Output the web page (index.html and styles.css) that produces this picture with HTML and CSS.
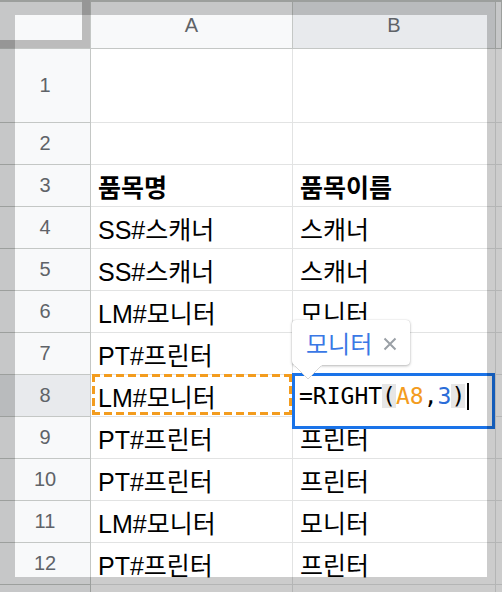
FILE: index.html
```html
<!DOCTYPE html>
<html lang="ko">
<head>
<meta charset="utf-8">
<title>Sheet</title>
<link rel="stylesheet" href="styles.css">
</head>
<body>
<div class="sheet">
  <div class="row hdr">
    <div class="rh corner"><span class="bar-v"></span><span class="bar-h"></span></div>
    <div class="ch a">A</div>
    <div class="ch b active">B</div>
    <div class="ch x"></div>
  </div>
  <div class="row tall"><div class="rh">1</div><div class="c a"></div><div class="c b"></div><div class="c x"></div></div>
  <div class="row"><div class="rh">2</div><div class="c a"></div><div class="c b"></div><div class="c x"></div></div>
  <div class="row"><div class="rh">3</div><div class="c a bold">품목명</div><div class="c b bold">품목이름</div><div class="c x"></div></div>
  <div class="row"><div class="rh">4</div><div class="c a">SS#스캐너</div><div class="c b">스캐너</div><div class="c x"></div></div>
  <div class="row"><div class="rh">5</div><div class="c a">SS#스캐너</div><div class="c b">스캐너</div><div class="c x"></div></div>
  <div class="row"><div class="rh">6</div><div class="c a">LM#모니터</div><div class="c b">모니터</div><div class="c x"></div></div>
  <div class="row"><div class="rh">7</div><div class="c a">PT#프린터</div><div class="c b"></div><div class="c x"></div></div>
  <div class="row"><div class="rh active">8</div>
    <div class="c a ref-cell">LM#모니터</div>
    <div class="c b edit-cell">
      <div class="tip">
        <span class="tip-text">모니터</span>
        <svg class="tip-x" width="14" height="14" viewBox="0 0 14 14"><path d="M1.5 1.5L12.5 12.5M12.5 1.5L1.5 12.5" stroke="#9aa0a6" stroke-width="2" fill="none"/></svg>
        <svg class="tip-arrow" width="28" height="17" viewBox="0 0 28 17"><path d="M0 1L14 15L28 1" fill="#fff" stroke="#d6d6d6" stroke-width="1"/><rect x="0" y="0" width="28" height="1.5" fill="#fff"/></svg>
      </div>
      <div class="editor"><span>=RIGHT</span><span class="par">(</span><span class="ref">A8</span><span>,</span><span class="num">3</span><span class="par">)</span><span class="caret"></span></div>
    </div>
    <div class="c x"></div></div>
  <div class="row"><div class="rh">9</div><div class="c a">PT#프린터</div><div class="c b">프린터</div><div class="c x"></div></div>
  <div class="row"><div class="rh">10</div><div class="c a">PT#프린터</div><div class="c b">프린터</div><div class="c x"></div></div>
  <div class="row"><div class="rh">11</div><div class="c a">LM#모니터</div><div class="c b">모니터</div><div class="c x"></div></div>
  <div class="row"><div class="rh">12</div><div class="c a">PT#프린터</div><div class="c b">프린터</div><div class="c x"></div></div>
  <div class="row"><div class="rh"></div><div class="c a"></div><div class="c b"></div><div class="c x"></div></div>
</div>
<div class="dim"></div>
</body>
</html>
```

FILE: styles.css
```css
* { box-sizing: border-box; }
html, body { margin: 0; padding: 0; }
body {
  width: 502px;
  height: 592px;
  overflow: hidden;
  position: relative;
  background: #fff;
  font-family: "Liberation Sans", "Noto Sans CJK KR", sans-serif;
}
.sheet { border-top: 2px solid #c4c7c5; }
.row { display: flex; height: 42px; }
.row.hdr { height: 47px; }
.row.tall { height: 74px; }

.rh, .ch {
  background: #f8f9fa;
  border-right: 1px solid #c4c7c5;
  border-bottom: 1px solid #c4c7c5;
  display: flex;
  align-items: center;
  justify-content: center;
  font-size: 20px;
  color: #5f6368;
}
.rh { flex: 0 0 91px; }
.rh.active, .ch.active { background: #e8eaed; }
.corner { position: relative; }
.bar-v, .bar-h { position: absolute; background: #bcbcbc; }
.bar-v { right: 0; top: -2px; bottom: 0; width: 8px; }
.bar-h { left: 0; right: 0; bottom: 0; height: 8px; }

.a { flex: 0 0 202px; }
.b { flex: 0 0 203px; }
.x { flex: 1 1 auto; }

.c {
  border-right: 1px solid #e2e3e3;
  border-bottom: 1px solid #e2e3e3;
  display: flex;
  align-items: center;
  padding-left: 7px;
  font-size: 25px;
  color: #000;
  white-space: nowrap;
}
.c.bold { font-weight: bold; }

.ref-cell { position: relative; }
.ref-cell::after {
  content: "";
  position: absolute;
  left: 1px; top: -1px; right: 0; bottom: 1px;
  background:
    repeating-linear-gradient(90deg, #f39c1e 0 8px, transparent 8px 12px) top left / 100% 3px no-repeat,
    repeating-linear-gradient(90deg, #f39c1e 0 8px, transparent 8px 12px) bottom left / 100% 3px no-repeat,
    repeating-linear-gradient(180deg, #f39c1e 0 8px, transparent 8px 12px) top left / 3px 100% no-repeat,
    repeating-linear-gradient(180deg, #f39c1e 0 8px, transparent 8px 12px) top right / 3px 100% no-repeat;
}

.edit-cell { position: relative; }
.editor {
  position: absolute;
  left: -1px;
  top: -2px;
  width: 203px;
  height: 56px;
  border: 3px solid #1a73e8;
  background: #fff;
  z-index: 5;
  padding: 6px 0 0 4px;
  font-family: "DejaVu Sans Mono", monospace;
  font-size: 23px;
  line-height: 28px;
  color: #000;
  display: flex;
  align-items: flex-start;
  white-space: pre;
}
.editor .par {
  background: #e6e6e6;
  display: inline-block;
  height: 24px;
  line-height: 24px;
  margin-top: 2px;
}
.editor .ref { color: #f39c1e; }
.editor .num { color: #2b6dd8; }
.editor .caret {
  display: inline-block;
  width: 2px;
  height: 27px;
  background: #000;
  margin-left: 2px;
  margin-top: 1px;
}

.tip {
  position: absolute;
  left: -1px;
  top: -55px;
  width: 118px;
  height: 45px;
  background: #fff;
  border-radius: 4px;
  box-shadow: 0 1px 3px rgba(0, 0, 0, 0.28), 0 0 1px rgba(0, 0, 0, 0.2);
  z-index: 6;
  display: flex;
  align-items: center;
  padding-left: 14px;
}
.tip-text { font-size: 24px; color: #3a78e5; }
.tip-x { margin-left: 11px; margin-top: 2px; }
.tip-arrow { position: absolute; left: 2px; top: 44px; }

.dim {
  position: absolute;
  left: 15px;
  top: 15px;
  width: 472px;
  height: 562px;
  box-shadow: 0 0 0 800px rgba(0, 0, 0, 0.2);
  pointer-events: none;
  z-index: 10;
}
```
